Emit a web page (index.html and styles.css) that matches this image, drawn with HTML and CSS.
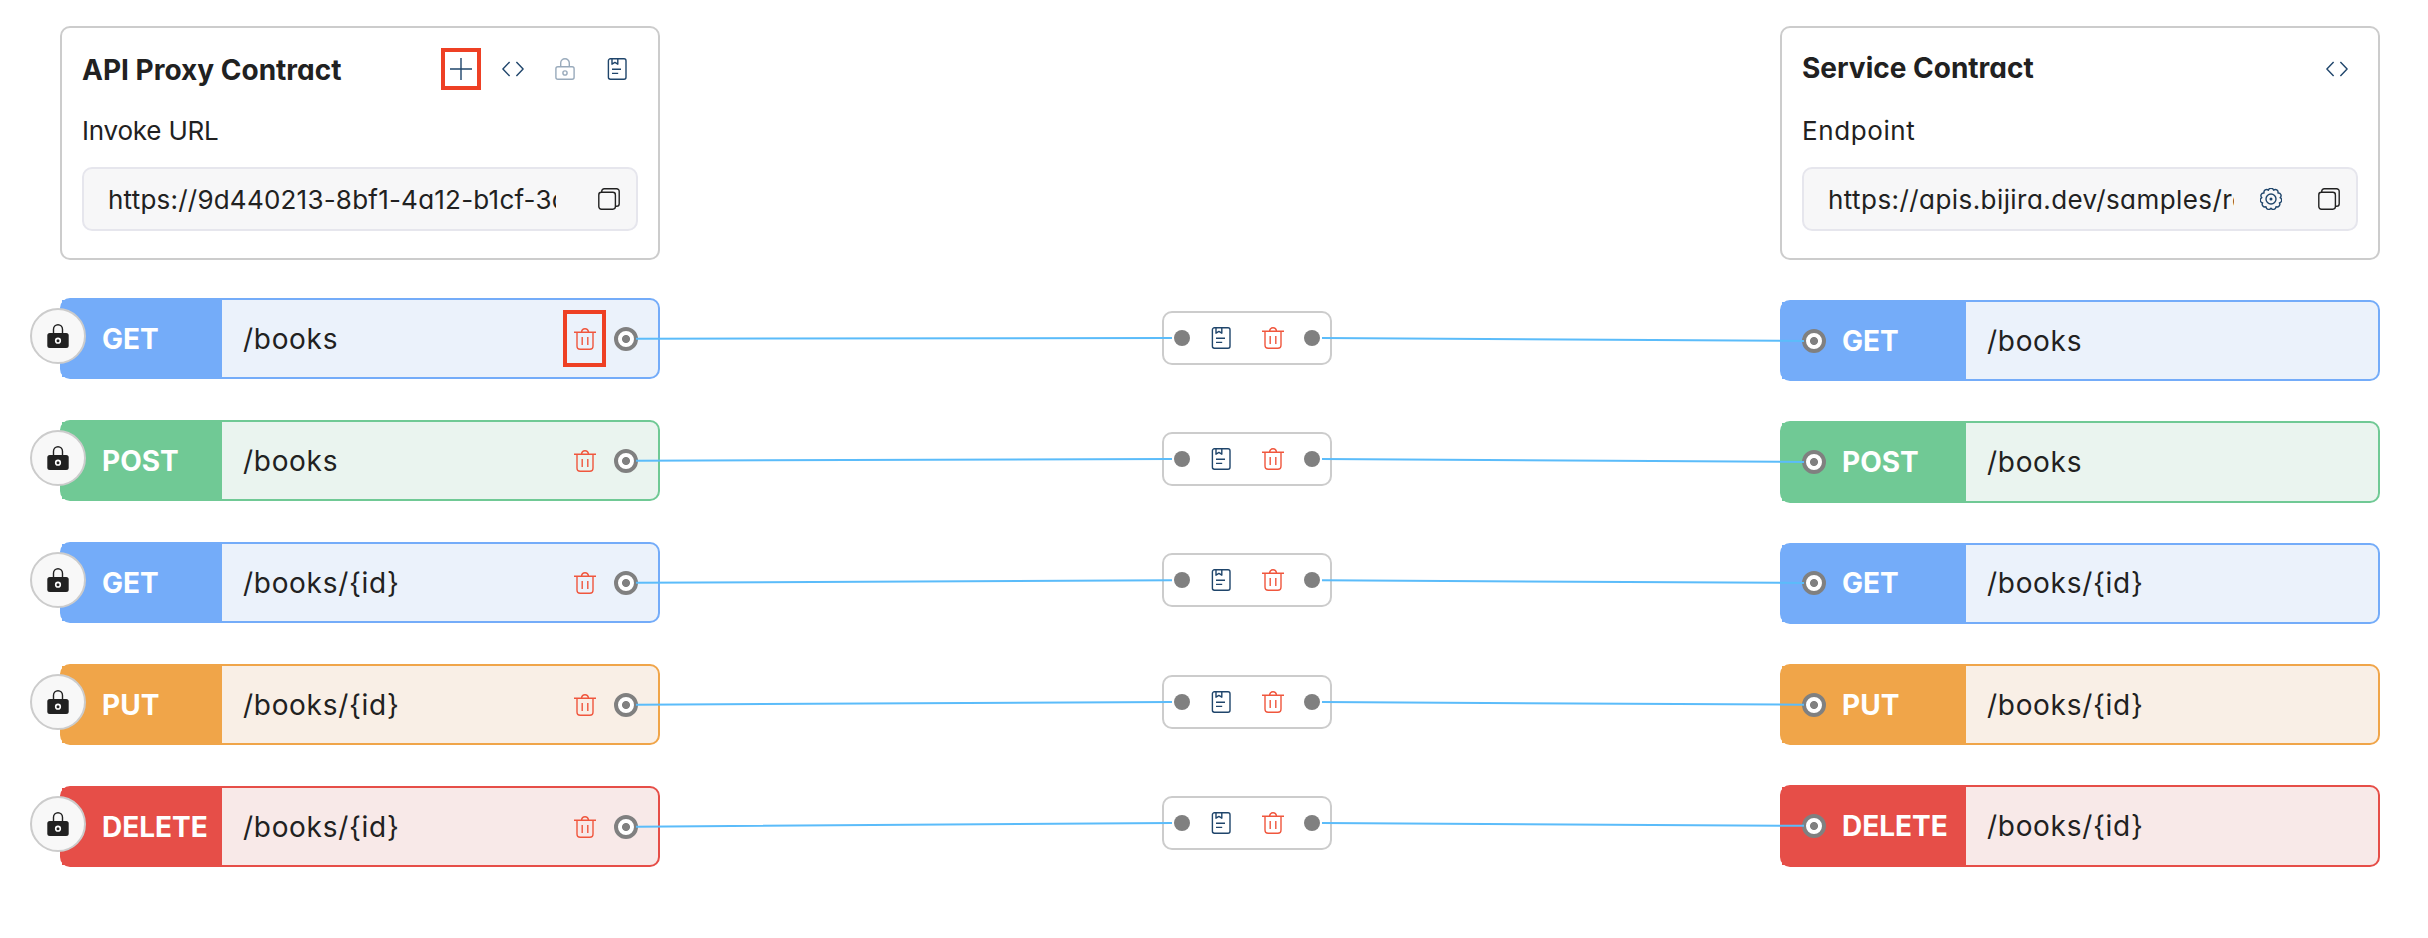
FILE: index.html
```html
<!DOCTYPE html>
<html lang="en">
<head>
<meta charset="utf-8">
<title>API Proxy Contract</title>
<link rel="stylesheet" href="styles.css">
</head>
<body>
<svg class="defs" aria-hidden="true">
  <symbol id="plus" viewBox="0 0 22 22"><path d="M11 0v22M0 11h22"/></symbol>
  <symbol id="code" viewBox="0 0 22 22"><path d="M7.6 4 .9 11l6.7 7M14.4 4l6.7 7-6.7 7"/></symbol>
  <symbol id="lock" viewBox="0 0 22 22"><rect x="1.9" y="8.7" width="18.2" height="12.6" rx="2"/><path d="M6.7 8.7V5a4.3 4.3 0 0 1 8.6 0v3.7"/><circle cx="11" cy="15" r="2.1"/></symbol>
  <symbol id="note" viewBox="0 0 22 22"><rect x="2.4" y=".8" width="17.6" height="20.4" rx="2"/><path d="M6 .8v5.4l2.9-1.8 2.9 1.8V.8M6 11.3h9M6 15.4h6.2"/></symbol>
  <symbol id="trash" viewBox="0 0 22 22"><path d="M0 4.3h22M7.4 4.3C7.8 1.8 9 .8 11 .8s3.2 1 3.6 3.5M3 4.3v13.7a3.2 3.2 0 0 0 3.2 3.2h9.6a3.2 3.2 0 0 0 3.2-3.2V4.3M8.2 9v8M13.8 9v8"/></symbol>
  <symbol id="copy" viewBox="0 0 22 22"><rect x=".8" y="4.3" width="16.6" height="16.9" rx="2.6"/><path d="M3.7 4.3V3.4A2.6 2.6 0 0 1 6.3.8h12.3a2.6 2.6 0 0 1 2.6 2.6v12.3a2.6 2.6 0 0 1-2.6 2.6h-1.2"/></symbol>
  <symbol id="gear" viewBox="0 0 22 22"><path d="M8.41 2.17A2.7 2.7 0 0 1 13.59 2.17A2.7 2.7 0 0 1 17.95 4.97A2.7 2.7 0 0 1 20.11 9.69A2.7 2.7 0 0 1 19.37 14.82A2.7 2.7 0 0 1 15.97 18.74A2.7 2.7 0 0 1 11 20.2A2.7 2.7 0 0 1 6.03 18.74A2.7 2.7 0 0 1 2.63 14.82A2.7 2.7 0 0 1 1.89 9.69A2.7 2.7 0 0 1 4.05 4.97A2.7 2.7 0 0 1 8.41 2.17Z"/><circle cx="11" cy="11" r="5"/><circle cx="11" cy="11" r=".8"/></symbol>
  <symbol id="padlock" viewBox="0 0 22 24"><path d="M6.5 9.5V5.2a4.5 4.5 0 0 1 9 0v4.3" fill="none" stroke="#212121" stroke-width="1.4"/><rect x=".3" y="9" width="21.4" height="15" rx="2.5" fill="#212121"/><circle cx="11" cy="16.7" r="2.3" fill="#212121" stroke="#fff" stroke-width="1.6"/></symbol>
</svg>

<main class="board">
  <section class="column proxy">
    <div class="card">
      <header class="card-head">
        <h2 class="card-title">API Proxy Contract</h2>
        <div class="actions">
          <span class="action marked"><svg class="icon"><use href="#plus"/></svg></span>
          <span class="action"><svg class="icon"><use href="#code"/></svg></span>
          <span class="action disabled"><svg class="icon"><use href="#lock"/></svg></span>
          <span class="action"><svg class="icon"><use href="#note"/></svg></span>
        </div>
      </header>
      <div class="label">Invoke URL</div>
      <div class="field">
        <span class="url">https://9d440213-8bf1-4a12-b1cf-3c</span>
        <svg class="icon ink"><use href="#copy"/></svg>
      </div>
    </div>
    <div class="rows">
      <div class="row get"><span class="badge"><svg class="padlock"><use href="#padlock"/></svg></span><span class="method">GET</span><span class="path">/books</span><span class="remove marked"><svg class="icon red"><use href="#trash"/></svg></span><i class="port"></i></div>
      <div class="row post"><span class="badge"><svg class="padlock"><use href="#padlock"/></svg></span><span class="method">POST</span><span class="path">/books</span><span class="remove"><svg class="icon red"><use href="#trash"/></svg></span><i class="port"></i></div>
      <div class="row get"><span class="badge"><svg class="padlock"><use href="#padlock"/></svg></span><span class="method">GET</span><span class="path">/books/{id}</span><span class="remove"><svg class="icon red"><use href="#trash"/></svg></span><i class="port"></i></div>
      <div class="row put"><span class="badge"><svg class="padlock"><use href="#padlock"/></svg></span><span class="method">PUT</span><span class="path">/books/{id}</span><span class="remove"><svg class="icon red"><use href="#trash"/></svg></span><i class="port"></i></div>
      <div class="row delete"><span class="badge"><svg class="padlock"><use href="#padlock"/></svg></span><span class="method">DELETE</span><span class="path">/books/{id}</span><span class="remove"><svg class="icon red"><use href="#trash"/></svg></span><i class="port"></i></div>
    </div>
  </section>

  <section class="column links">
    <div class="link"><i class="dot"></i><svg class="icon"><use href="#note"/></svg><svg class="icon red"><use href="#trash"/></svg><i class="dot"></i></div>
    <div class="link"><i class="dot"></i><svg class="icon"><use href="#note"/></svg><svg class="icon red"><use href="#trash"/></svg><i class="dot"></i></div>
    <div class="link"><i class="dot"></i><svg class="icon"><use href="#note"/></svg><svg class="icon red"><use href="#trash"/></svg><i class="dot"></i></div>
    <div class="link"><i class="dot"></i><svg class="icon"><use href="#note"/></svg><svg class="icon red"><use href="#trash"/></svg><i class="dot"></i></div>
    <div class="link"><i class="dot"></i><svg class="icon"><use href="#note"/></svg><svg class="icon red"><use href="#trash"/></svg><i class="dot"></i></div>
  </section>

  <section class="column service">
    <div class="card">
      <header class="card-head">
        <h2 class="card-title">Service Contract</h2>
        <div class="actions">
          <span class="action"><svg class="icon"><use href="#code"/></svg></span>
        </div>
      </header>
      <div class="label">Endpoint</div>
      <div class="field">
        <span class="url">https://apis.bijira.dev/samples/re</span>
        <svg class="icon"><use href="#gear"/></svg>
        <svg class="icon ink"><use href="#copy"/></svg>
      </div>
    </div>
    <div class="rows">
      <div class="row get"><span class="method"><i class="port"></i>GET</span><span class="path">/books</span></div>
      <div class="row post"><span class="method"><i class="port"></i>POST</span><span class="path">/books</span></div>
      <div class="row get"><span class="method"><i class="port"></i>GET</span><span class="path">/books/{id}</span></div>
      <div class="row put"><span class="method"><i class="port"></i>PUT</span><span class="path">/books/{id}</span></div>
      <div class="row delete"><span class="method"><i class="port"></i>DELETE</span><span class="path">/books/{id}</span></div>
    </div>
  </section>

  <svg class="wires" viewBox="0 0 2428 938">
    <path d="M636 338.7 1172 338M1322 338 1804 341"/>
    <path d="M636 460.7 1172 459M1322 459 1804 462"/>
    <path d="M636 582.7 1172 580.3M1322 580.3 1804 583"/>
    <path d="M636 704.7 1172 702M1322 702 1804 704.7"/>
    <path d="M636 826.7 1172 823M1322 823 1804 825.8"/>
  </svg>
</main>
</body>
</html>
```
FILE: styles.css
```css
* { box-sizing: border-box; }

body {
  margin: 0;
  background: #fff;
  color: #212121;
  font-family: Inter, "Liberation Sans", sans-serif;
  font-feature-settings: "cv11" 1;
}

.defs { display: none; }

.board {
  position: relative;
  display: flex;
  align-items: flex-start;
  width: 2428px;
  height: 938px;
  padding: 26px 48px 0 60px;
}

.column { display: flex; flex: none; flex-direction: column; }
.proxy { width: 600px; gap: 38px; }
.service { width: 600px; gap: 40px; }

/* Contract cards */
.card {
  height: 234px;
  padding: 21px 20px 0;
  border: 2px solid #ccc;
  border-radius: 10px;
  background: #fff;
}

.card-head {
  display: flex;
  align-items: center;
  justify-content: space-between;
  height: 40px;
}

.card-title {
  margin: 0;
  padding-top: 1px;
  font-size: 28px;
  line-height: 40px;
  font-weight: 700;
}
.service .card-title { padding: 0 0 3px; }

.actions { display: flex; margin-right: -5px; }
.action { display: flex; justify-content: center; width: 52px; }
.disabled { opacity: .45; }

.label {
  margin: 25px 0 20px;
  font-size: 26px;
  line-height: 33px;
  letter-spacing: -.2px;
}
.service .label { letter-spacing: .6px; }

.field {
  display: flex;
  align-items: center;
  justify-content: space-between;
  height: 64px;
  padding: 0 16px 0 24px;
  border: 2px solid #e6e6ed;
  border-radius: 10px;
  background: #f7f7f8;
}

.url {
  width: 448px;
  padding-top: 2px;
  overflow: hidden;
  white-space: nowrap;
  font-size: 26px;
  line-height: 40px;
  letter-spacing: .22px;
}
.service .field { justify-content: flex-start; gap: 36px; }
.service .url { width: 406px; margin-right: -10px; letter-spacing: .43px; }

/* Icons */
.icon {
  flex: none;
  width: 22px;
  height: 22px;
  overflow: visible;
  fill: none;
  stroke: #1f456b;
  stroke-width: 1.4;
  stroke-linejoin: round;
}
.icon.red { stroke: #f0563d; }
.icon.ink { stroke: #212121; }

/* Operation rows */
.rows { display: flex; flex-direction: column; }
.proxy .rows { gap: 41px; }
.service .rows { gap: 40px; }

.row {
  position: relative;
  display: flex;
  align-items: center;
  height: 81px;
  border: 2px solid;
  border-radius: 10px;
  font-size: 28px;
}
.service .row { height: 81.33px; }

.get { border-color: #74acf9; background: #ebf2fb; }
.post { border-color: #70c995; background: #eaf4ef; }
.put { border-color: #f0a549; background: #f9efe6; }
.delete { border-color: #e64e48; background: #f8e9e8; }
.get .method { background: #74acf9; }
.post .method { background: #70c995; }
.put .method { background: #f0a549; }
.delete .method { background: #e64e48; }

.method {
  display: flex;
  align-items: center;
  gap: 16px;
  align-self: stretch;
  width: 160px;
  padding-left: 40px;
  color: #fff;
  font-weight: 700;
}
.service .method { width: 184px; padding-left: 20px; }

.path { flex: 1; padding-left: 21px; letter-spacing: .7px; }

.remove { display: flex; margin-right: 18px; }

.port {
  flex: none;
  width: 24px;
  height: 24px;
  border: 4px solid #808080;
  border-radius: 50%;
  background: radial-gradient(circle, #808080 3.6px, #fff 4.4px);
}
.proxy .port { margin-right: 20px; }

.badge {
  position: absolute;
  top: 8px;
  left: -32px;
  display: flex;
  align-items: center;
  justify-content: center;
  width: 56px;
  height: 56px;
  border: 2px solid #ccc;
  border-radius: 50%;
  background: #f8f8f8;
}
.padlock { width: 22px; height: 24px; }

/* Highlight frames drawn around a control */
.marked { position: relative; }
.marked::after {
  content: "";
  position: absolute;
  border: 4px solid #ee4024;
}
.action.marked::after { inset: -10px 6px; }
.remove.marked::after { inset: -18px -10px -17px -11px; }

/* Mapping nodes */
.links { width: 170px; gap: 67.33px; margin: 284.67px 448px 0 502px; }
.link {
  display: flex;
  align-items: center;
  height: 54px;
  padding: 0 10px;
  border: 2px solid #ccc;
  border-radius: 10px;
  background: #fff;
}
.link .icon { margin-left: 20px; }
.link .icon + .icon { margin: 0 20px 0 30px; }
.dot {
  flex: none;
  width: 16px;
  height: 16px;
  border-radius: 50%;
  background: #808080;
}

.wires {
  position: absolute;
  inset: 0;
  width: 2428px;
  height: 938px;
  fill: none;
  stroke: #5bbcfa;
  stroke-width: 2;
  pointer-events: none;
}
```
